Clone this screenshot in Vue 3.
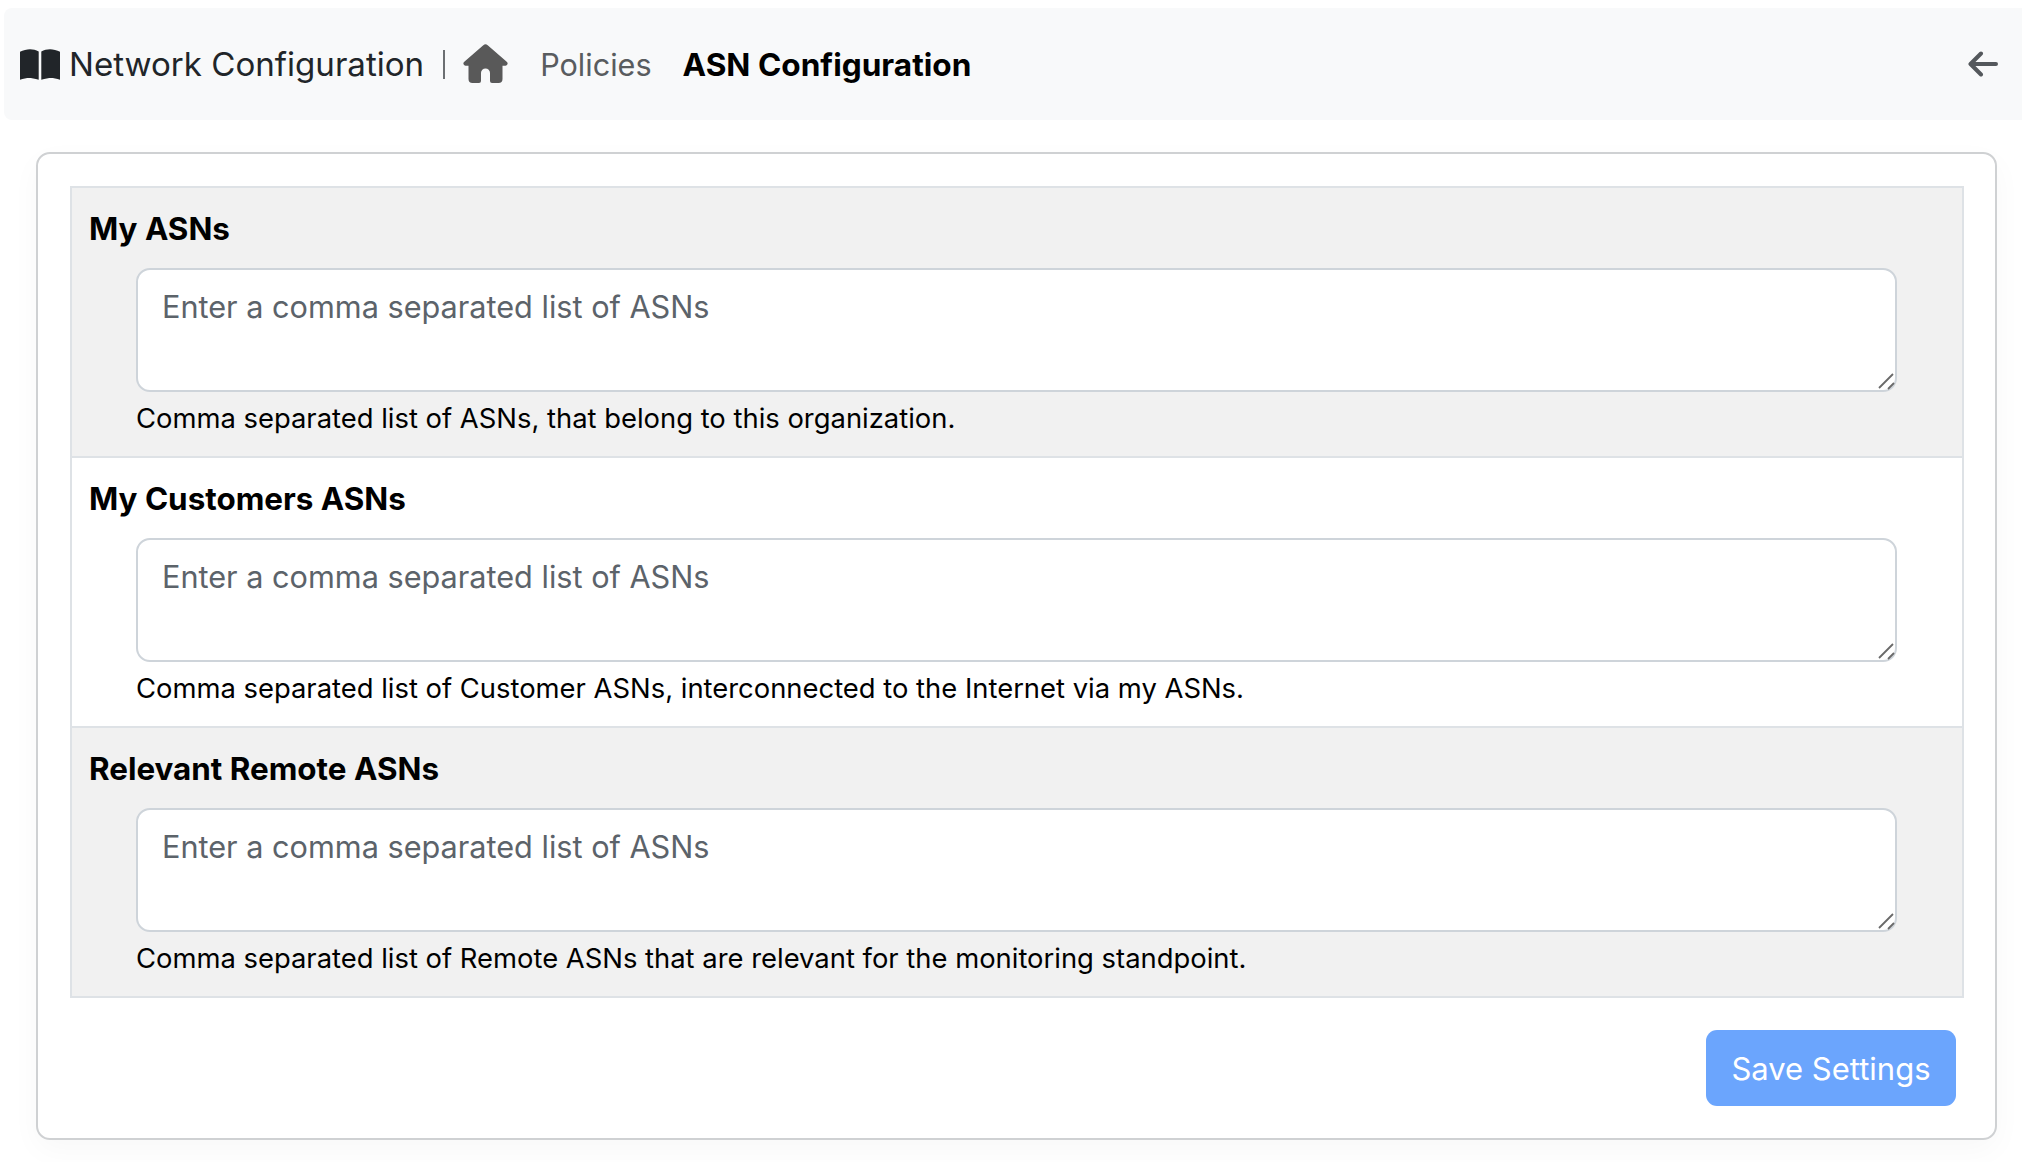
<script setup>
const sections = [
  {
    title: "My ASNs",
    help: "Comma separated list of ASNs, that belong to this organization.",
  },
  {
    title: "My Customers ASNs",
    help: "Comma separated list of Customer ASNs, interconnected to the Internet via my ASNs.",
  },
  {
    title: "Relevant Remote ASNs",
    help: "Comma separated list of Remote ASNs that are relevant for the monitoring standpoint.",
  },
];
</script>

<template>
  <div class="page">
    <nav class="topbar">
      <svg class="book" viewBox="0 0 40 31" aria-hidden="true">
        <path d="M0 2.800C3 1 7 .2 10 .2s6 .8 8.700 2.300V30.800C15 29.500 11 29 9 29s-6 .6-9 1.800z" />
        <path d="M40 2.800C37 1 33 .2 30 .2s-6 .8-8.700 2.300V30.800C25 29.500 29 29 31 29s6 .6 9 1.800z" />
      </svg>
      <span class="title">Network Configuration</span>
      <span class="sep"></span>
      <svg class="home" viewBox="0 0 45 40" aria-hidden="true">
        <path d="M20.3 1.2a3.2 3.2 0 0 1 4.4 0L44 18a2.2 2.2 0 0 1-1.500 3.700H39.500V35a4 4 0 0 1-4 4H29a2 2 0 0 1-2-2V29a4.500 4.500 0 0 0-9 0v8a2 2 0 0 1-2 2H9.500a4 4 0 0 1-4-4V21.700H2.500A2.200 2.200 0 0 1 1 18z" />
      </svg>
      <a class="crumb">Policies</a>
      <span class="current">ASN Configuration</span>
      <svg class="back" viewBox="0 0 30 26" aria-hidden="true">
        <path d="M28 13H3M13 2.500 2.500 13 13 23.500" />
      </svg>
    </nav>

    <main class="card">
      <div class="list">
        <section v-for="s in sections" :key="s.title" class="row">
          <h3>{{ s.title }}</h3>
          <div class="field">
            <div class="box">
              <textarea placeholder="Enter a comma separated list of ASNs"></textarea>
              <svg class="grip" viewBox="0 0 18 18" aria-hidden="true">
                <path d="M1 16 15 2M10 17l6-6" />
              </svg>
            </div>
            <p>{{ s.help }}</p>
          </div>
        </section>
      </div>
      <div class="actions">
        <button disabled>Save Settings</button>
      </div>
    </main>
  </div>
</template>

<style scoped>
.page {
  font-family: Inter, "Liberation Sans", sans-serif;
  color: #000;
  padding-top: 8px;
  height: 1162px;
  box-sizing: border-box;
  overflow: hidden;
}

.topbar {
  display: flex;
  align-items: center;
  height: 112px;
  margin-left: 4px;
  padding-left: 16px;
  background: #f8f9fa;
  border-radius: 8px 0 0 8px;
}

.book {
  width: 40px;
  height: 31px;
  fill: #212529;
}

.title {
  margin-left: 9px;
  font-size: 33.1px;
  color: #212529;
}

.sep {
  width: 2px;
  height: 29px;
  margin-left: 19px;
  background: #6c6f72;
}

.home {
  width: 45px;
  height: 40px;
  margin-left: 18px;
  fill: #595959;
}

.crumb {
  margin-left: 32px;
  font-size: 30.6px;
  color: #595c5f;
}

.current {
  margin-left: 31px;
  font-size: 31.6px;
  font-weight: 700;
}

.back {
  width: 30px;
  height: 26px;
  margin-left: auto;
  margin-right: 24px;
  fill: none;
  stroke: #54585c;
  stroke-width: 4;
  stroke-linecap: round;
  stroke-linejoin: round;
}

.card {
  margin: 32px 25px 0 36px;
  padding: 32px 31px 31px 32px;
  height: 988px;
  box-sizing: border-box;
  border: 2px solid #cfd1d3;
  border-radius: 14px;
  box-shadow: 0 10px 30px rgba(0, 0, 0, 0.03);
}

.list {
  border: 2px solid #dee2e6;
}

.row {
  height: 270px;
  box-sizing: border-box;
  padding: 19px 65px 0 17px;
  border-top: 2px solid #dee2e6;
}

.row:first-child {
  border-top: 0;
  height: 268px;
}

.row:nth-child(odd) {
  background: #f1f1f1;
}

h3 {
  margin: 0 0 17px;
  font-size: 31.4px;
  line-height: 44px;
  font-weight: 700;
}

.field {
  padding-left: 47px;
}

.box {
  position: relative;
}

textarea {
  display: block;
  width: 100%;
  height: 124px;
  box-sizing: border-box;
  padding: 14px 24px;
  border: 2px solid #ced4da;
  border-radius: 14px;
  background: #fff;
  font: 30.65px/1.5 Inter, "Liberation Sans", sans-serif;
  resize: none;
  outline: none;
}

textarea::placeholder {
  color: #5c636a;
  opacity: 1;
}

.grip {
  position: absolute;
  right: 1px;
  bottom: 2px;
  width: 18px;
  height: 18px;
  fill: none;
  stroke: #6a6a6a;
  stroke-width: 1.800;
  pointer-events: none;
}

.field p {
  margin: 6px 0 0;
  font-size: 27.4px;
  line-height: 40px;
}

.actions {
  display: flex;
  justify-content: flex-end;
  margin-top: 32px;
  padding-right: 8px;
}

button {
  width: 250px;
  height: 76px;
  border: 0;
  border-radius: 11px;
  background: #6ba5fd;
  color: #fff;
  font: 31px Inter, "Liberation Sans", sans-serif;
}
</style>
